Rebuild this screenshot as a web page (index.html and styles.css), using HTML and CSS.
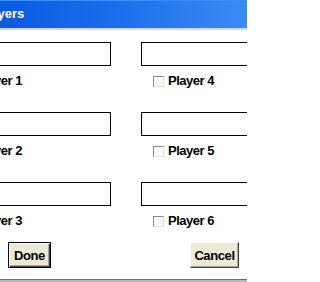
FILE: index.html
```html
<!DOCTYPE html>
<html>
<head>
<meta charset="utf-8">
<link rel="stylesheet" href="styles.css">
</head>
<body>
<div class="dialog">
  <div class="titlebar"><span class="title">Players</span></div>
  <div class="body">
    <div class="grid">
      <div class="cell">
        <div class="field"></div>
        <div class="label"><span class="check"></span>Player 1</div>
      </div>
      <div class="cell">
        <div class="field"></div>
        <div class="label"><span class="check"></span>Player 4</div>
      </div>
      <div class="cell">
        <div class="field"></div>
        <div class="label"><span class="check"></span>Player 2</div>
      </div>
      <div class="cell">
        <div class="field"></div>
        <div class="label"><span class="check"></span>Player 5</div>
      </div>
      <div class="cell">
        <div class="field"></div>
        <div class="label"><span class="check"></span>Player 3</div>
      </div>
      <div class="cell">
        <div class="field"></div>
        <div class="label"><span class="check"></span>Player 6</div>
      </div>
    </div>
    <div class="buttons">
      <button class="btn btn-default">Done</button>
      <button class="btn btn-cancel">Cancel</button>
    </div>
  </div>
  <div class="footer"></div>
</div>
</body>
</html>
```
FILE: styles.css
```css
html {
  margin: 0;
  padding: 0;
  width: 247px;
  height: 282px;
  overflow: hidden;
  background: #ffffff;
}
body {
  margin: 0;
  padding: 0;
  width: 247px;
  height: 282px;
  overflow: hidden;
  background: #ffffff;
  font-family: "Liberation Sans", Arial, sans-serif;
}
.dialog {
  width: 247px;
  height: 282px;
  display: flex;
  flex-direction: column;
  overflow: hidden;
}
.titlebar {
  height: 27px;
  flex: none;
  border-top: 1px solid #3c8ff7;
  border-bottom: 2px solid #c9daf4;
  background: linear-gradient(to right, #0a5ae2 0%, #1d6fec 50%, #3a8cf4 100%);
  color: #ffffff;
  font-weight: bold;
  font-size: 13px;
  line-height: 26px;
  white-space: nowrap;
  overflow: hidden;
}
.title {
  display: inline-block;
  margin-left: -22px;
}
.body {
  flex: 1;
  padding-top: 12px;
}
.grid {
  margin-left: -51px;
  display: grid;
  grid-template-columns: 162px 162px;
  column-gap: 30px;
  grid-template-rows: 70px 70px 60px;
}
.field {
  height: 24px;
  box-sizing: border-box;
  border: 1px solid #000000;
  background: #ffffff;
}
.label {
  margin-top: 8px;
  height: 14px;
  display: flex;
  align-items: center;
  padding-left: 12px;
  font-size: 13px;
  letter-spacing: -0.5px;
  line-height: 14px;
  font-weight: bold;
  color: #000000;
  white-space: nowrap;
}
.check {
  width: 11px;
  height: 11px;
  box-sizing: border-box;
  border-style: solid;
  border-width: 1px;
  border-color: #8a8a8a #e0e0e0 #e0e0e0 #8a8a8a;
  background: #fbfbfb;
  margin-right: 4px;
  flex: none;
}
.buttons {
  display: flex;
  justify-content: space-between;
  padding: 0 8px 0 8px;
}
.btn {
  font-family: "Liberation Sans", Arial, sans-serif;
  font-weight: bold;
  font-size: 13px;
  letter-spacing: -0.4px;
  color: #000000;
  background: #ece9d8;
  height: 26px;
  padding: 0;
  margin: 0;
  box-sizing: border-box;
}
.btn-default {
  width: 43px;
  border: 1px solid #000000;
  box-shadow: inset 1px 1px 0 #ffffff, inset -1px -1px 0 #404040, inset -2px -2px 0 #aca899;
}
.btn-cancel {
  width: 49px;
  border-style: solid;
  border-width: 1px;
  border-color: #ffffff #404040 #404040 #ffffff;
  box-shadow: inset -1px -1px 0 #aca899;
}
.footer {
  flex: none;
  height: 2px;
  border-top: 1px solid #6f6f6f;
  background: #b8b8b8;
}
```
